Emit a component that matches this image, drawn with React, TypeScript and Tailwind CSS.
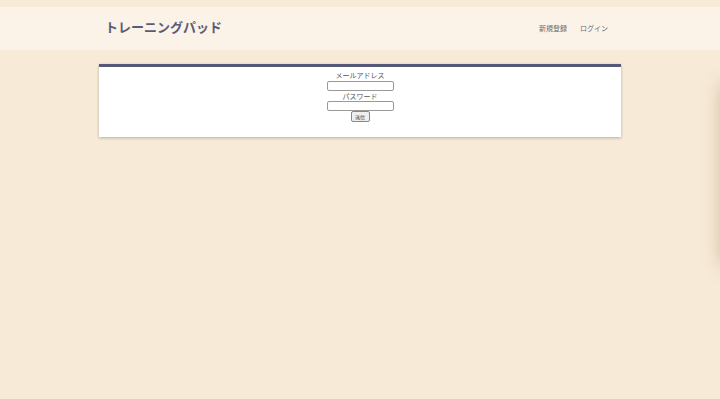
const FONT = { fontFamily: '"Noto Sans CJK JP", "Noto Sans", sans-serif' }

function Header() {
  return (
    <header className="h-[43px] bg-[#fbf3e7]">
      <div className="mx-auto flex h-full w-[522px] items-center justify-between pl-[6px] pr-[13px]">
        <h1 className="text-[13px] font-bold leading-none text-[#5b5b78] pb-[4px]">トレーニングパッド</h1>
        <nav className="flex gap-[13px] text-[7px] text-[#6b6b70]">
          <a>新規登録</a>
          <a>ログイン</a>
        </nav>
      </div>
    </header>
  )
}

function LoginForm() {
  return (
    <form className="mx-auto mt-[14px] flex h-[73px] w-[522px] flex-col items-center border-t-[3px] border-[#555878] bg-white pt-[2px] shadow-[0_1px_3px_rgba(0,0,0,0.25)]">
      <label className="text-[7px] leading-[12px] text-[#555]">メールアドレス</label>
      <input type="text" className="h-[10px] w-[67px] rounded-[2px] border border-[#999] bg-white" />
      <label className="text-[7px] leading-[10px] text-[#555]">パスワード</label>
      <input type="password" className="h-[10px] w-[67px] rounded-[2px] border border-[#999] bg-white" />
      <button type="button" className="h-[11px] w-[19px] rounded-[2px] border border-[#888] bg-[#efefef] text-[5px] leading-none text-[#333]">
        送信
      </button>
    </form>
  )
}

export default function App() {
  return (
    <div className="relative min-h-[399px] overflow-hidden bg-[#f7ead7] pt-[7px]" style={FONT}>
      <Header />
      <LoginForm />
      <div className="fixed left-[722px] top-[85px] h-[180px] w-[100px] bg-[#f7ead7] shadow-[0_0_18px_rgba(120,90,40,0.35)]" />
    </div>
  )
}
